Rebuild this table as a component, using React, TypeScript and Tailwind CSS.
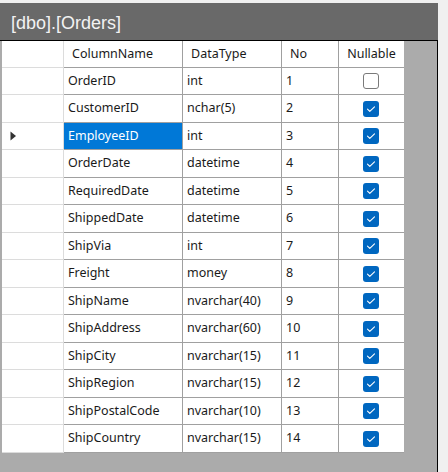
import React from 'react';

type Col = { name: string; type: string; no: number; nullable: boolean };

const columns: Col[] = [
  { name: 'OrderID', type: 'int', no: 1, nullable: false },
  { name: 'CustomerID', type: 'nchar(5)', no: 2, nullable: true },
  { name: 'EmployeeID', type: 'int', no: 3, nullable: true },
  { name: 'OrderDate', type: 'datetime', no: 4, nullable: true },
  { name: 'RequiredDate', type: 'datetime', no: 5, nullable: true },
  { name: 'ShippedDate', type: 'datetime', no: 6, nullable: true },
  { name: 'ShipVia', type: 'int', no: 7, nullable: true },
  { name: 'Freight', type: 'money', no: 8, nullable: true },
  { name: 'ShipName', type: 'nvarchar(40)', no: 9, nullable: true },
  { name: 'ShipAddress', type: 'nvarchar(60)', no: 10, nullable: true },
  { name: 'ShipCity', type: 'nvarchar(15)', no: 11, nullable: true },
  { name: 'ShipRegion', type: 'nvarchar(15)', no: 12, nullable: true },
  { name: 'ShipPostalCode', type: 'nvarchar(10)', no: 13, nullable: true },
  { name: 'ShipCountry', type: 'nvarchar(15)', no: 14, nullable: true },
];

const SELECTED = 2;

const CheckBox = ({ checked }: { checked: boolean }) =>
  checked ? (
    <div className="w-[16px] h-[16px] rounded-[3px] bg-[#0067c0] flex items-center justify-center">
      <svg width="16" height="16" viewBox="0 0 16 16">
        <path d="M4.5 8.2 L6.8 10.4 L11.5 5.8" fill="none" stroke="#ffffff" strokeWidth="1.1" strokeLinecap="round" strokeLinejoin="round" />
      </svg>
    </div>
  ) : (
    <div className="w-[16px] h-[16px] rounded-[3px] bg-white border border-[#7a7a7a]" />
  );

export default function App() {
  return (
    <div className="w-[448px] h-[472px] bg-[#f0f0f0] pt-[3px] overflow-hidden font-['Noto_Sans',sans-serif]">
      {/* title bar */}
      <div className="w-[438px] h-[37px] bg-[#696969] flex items-center pl-[11px] pt-[4px]">
        <span className="text-[18px] text-[#f2f2f2] font-['Liberation_Sans',sans-serif]">[dbo].[Orders]</span>
      </div>

      {/* grid */}
      <div className="w-[438px] h-[432px] bg-[#ababab] border-t border-r border-black pl-[2px]">
        <div className="grid grid-cols-[62px_119px_99px_57px_65px] w-[402px] text-[12.5px] text-[#1a1a1a]">
          {/* header */}
          <div className="h-[27px] bg-white border-r border-b border-[#dcdcdc]" />
          <div className="h-[27px] bg-white border-r border-b border-[#a0a0a0] flex items-center pl-[8px]">ColumnName</div>
          <div className="h-[27px] bg-white border-r border-b border-[#a0a0a0] flex items-center pl-[8px]">DataType</div>
          <div className="h-[27px] bg-white border-r border-b border-[#a0a0a0] flex items-center pl-[8px]">No</div>
          <div className="h-[27px] bg-white border-b border-[#a0a0a0] flex items-center justify-center">Nullable</div>

          {columns.map((c, i) => {
            const h = i % 2 === 0 ? 'h-[27px]' : 'h-[28px]';
            const sel = i === SELECTED;
            return (
              <React.Fragment key={c.name}>
                <div className={`${h} bg-white border-r border-b border-[#dcdcdc] flex items-center pl-[8px]`}>
                  {sel && (
                    <svg width="7" height="10" viewBox="0 0 7 10">
                      <path d="M0.5 0.5 L6 5 L0.5 9.5 Z" fill="#333333" />
                    </svg>
                  )}
                </div>
                <div
                  className={`${h} border-r border-b border-[#a0a0a0] flex items-center pl-[4px] ${
                    sel ? 'bg-[#0078d7] text-white' : 'bg-white'
                  }`}
                >
                  {c.name}
                </div>
                <div className={`${h} bg-white border-r border-b border-[#a0a0a0] flex items-center pl-[4px]`}>{c.type}</div>
                <div className={`${h} bg-white border-r border-b border-[#a0a0a0] flex items-center pl-[4px]`}>{c.no}</div>
                <div className={`${h} bg-white border-b border-[#a0a0a0] flex items-center justify-center pr-[1px]`}>
                  <CheckBox checked={c.nullable} />
                </div>
              </React.Fragment>
            );
          })}
        </div>
      </div>
    </div>
  );
}
